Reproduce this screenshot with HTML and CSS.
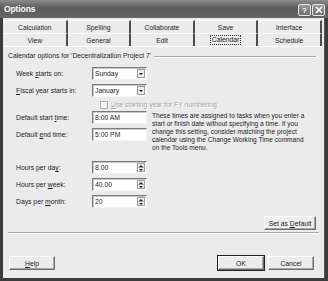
FILE: index.html
```html
<!DOCTYPE html>
<html lang="en">
<head>
    <meta charset="UTF-8">
    <title>Options</title>
    <link rel="stylesheet" href="styles.css">
</head>
<body>
    <div class="window">
        <div class="titlebar">
            <span class="title">Options</span>
            <div class="caption-btns">
                <span class="cap-btn">?</span>
                <span class="cap-btn">
                    <svg width="8" height="8" viewBox="0 0 8 8"><path d="M1 1 L7 7 M7 1 L1 7" stroke="#fff" stroke-width="1.6"/></svg>
                </span>
            </div>
        </div>

        <div class="client">
            <!-- two rows of tabs, the selected row sits next to the panel -->
            <div class="tabs">
                <div class="tab">Calculation</div>
                <div class="tab">Spelling</div>
                <div class="tab">Collaborate</div>
                <div class="tab">Save</div>
                <div class="tab">Interface</div>
                <div class="tab">View</div>
                <div class="tab">General</div>
                <div class="tab">Edit</div>
                <div class="tab active"><span class="focus">Calendar</span></div>
                <div class="tab">Schedule</div>
            </div>

            <div class="panel">
                <div class="group-head">
                    <span>Calendar options for 'Decentralization Project 7'</span>
                    <span class="rule"></span>
                </div>

                <div class="field first">
                    <label>Week <u>s</u>tarts on:</label>
                    <div class="combo">Sunday<span class="drop"></span></div>
                </div>
                <div class="field">
                    <label><u>F</u>iscal year starts in:</label>
                    <div class="combo">January<span class="drop"></span></div>
                </div>
                <div class="check-row">
                    <span class="checkbox"></span>
                    <span class="disabled"><u>U</u>se starting year for FY numbering</span>
                </div>

                <div class="times">
                    <div class="times-fields">
                        <div class="field">
                            <label>Default start <u>t</u>ime:</label>
                            <div class="textbox">8:00 AM</div>
                        </div>
                        <div class="field">
                            <label>Default <u>e</u>nd time:</label>
                            <div class="textbox">5:00 PM</div>
                        </div>
                    </div>
                    <p class="note">These times are assigned to tasks when you enter a start or finish date without specifying a time. If you change this setting, consider matching the project calendar using the Change Working Time command on the Tools menu.</p>
                </div>

                <div class="field hours">
                    <label>Hours per da<u>y</u>:</label>
                    <div class="spin">8.00<span class="spin-btns"><span class="up"></span><span class="down"></span></span></div>
                </div>
                <div class="field">
                    <label>Hours per <u>w</u>eek:</label>
                    <div class="spin">40.00<span class="spin-btns"><span class="up"></span><span class="down"></span></span></div>
                </div>
                <div class="field">
                    <label>Days per <u>m</u>onth:</label>
                    <div class="spin">20<span class="spin-btns"><span class="up"></span><span class="down"></span></span></div>
                </div>

                <div class="default-row">
                    <button class="btn btn-default-set">Set as <u>D</u>efault</button>
                </div>
            </div>

            <div class="divider"></div>

            <div class="footer">
                <button class="btn"><u>H</u>elp</button>
                <div class="footer-right">
                    <button class="btn btn-ok">OK</button>
                    <button class="btn">Cancel</button>
                </div>
            </div>
        </div>
    </div>
</body>
</html>
```

FILE: styles.css
```css
body {
    margin: 0;
    font-family: "Liberation Sans", Arial, sans-serif;
    font-size: 6.8px;
    color: #1e1e1e;
    background: #3c3c3c;
}

.window {
    width: 328px;
    height: 281px;
    display: flex;
    flex-direction: column;
    background: #3c3c3c;
}

.titlebar {
    height: 18px;
    flex-shrink: 0;
    display: flex;
    align-items: center;
    justify-content: space-between;
    padding: 0 3px 0 4px;
    background: linear-gradient(#8c8c8c, #5c5c5c 45%, #666);
}

.title {
    color: #fff;
    font-size: 8.5px;
    font-weight: bold;
    letter-spacing: -0.1px;
}

.caption-btns {
    display: flex;
    gap: 1px;
    margin-top: 2px;
}

.cap-btn {
    width: 11px;
    height: 10px;
    display: flex;
    align-items: center;
    justify-content: center;
    border: 1px solid #e6e6e6;
    border-radius: 2px;
    background: linear-gradient(#9a9a9a, #6e6e6e);
    color: #fff;
    font-size: 8px;
    font-weight: bold;
}

.client {
    flex: 1;
    display: flex;
    flex-direction: column;
    margin: 0 3px 3px;
    padding: 2px 0 0 1px;
    background: #ebebeb;
    border-right: 1px solid #555;
}

.tabs {
    width: 318px;
    display: grid;
    grid-template-columns: repeat(5, 1fr);
    grid-auto-rows: 13px;
}

.tab {
    display: flex;
    align-items: center;
    justify-content: center;
    border-top: 1px solid #fbfbfb;
    border-right: 2px solid #4e4e4e;
}

.tab .focus {
    padding: 0 1px;
    border: 1px dotted #333;
    line-height: 8px;
}

.panel {
    width: 318px;
    height: 186px;
    display: flex;
    flex-direction: column;
    padding: 4px 0 0 0;
    border-top: 1px solid #fff;
    box-sizing: border-box;
}

.group-head {
    display: flex;
    align-items: center;
    gap: 3px;
    height: 9px;
    padding: 0 6px 0 4px;
}

.group-head .rule {
    flex: 1;
    height: 0;
    margin-top: 2px;
    border-top: 1px solid #a9a9a9;
    border-bottom: 1px solid #fff;
}

.field {
    display: flex;
    align-items: center;
    height: 13px;
    padding-left: 12px;
    margin-top: 4px;
}

.field.first {
    margin-top: 7px;
}

.field label {
    width: 76px;
}

.combo,
.textbox,
.spin {
    position: relative;
    width: 55px;
    height: 13px;
    box-sizing: border-box;
    display: flex;
    align-items: center;
    padding-left: 2px;
    background: #fff;
    border: 1px solid;
    border-color: #7a7a7a #f4f4f4 #f4f4f4 #7a7a7a;
    box-shadow: inset 1px 1px 0 #c8c8c8;
}

.drop {
    position: absolute;
    right: 1px;
    top: 1px;
    width: 8px;
    height: 9px;
    background: #ececec;
    border: 1px solid #9a9a9a;
    box-sizing: border-box;
}

.drop::after {
    content: "";
    position: absolute;
    left: 1px;
    top: 3px;
    border-left: 2px solid transparent;
    border-right: 2px solid transparent;
    border-top: 2px solid #111;
}

.spin-btns {
    position: absolute;
    right: 1px;
    top: 1px;
    width: 8px;
    height: 9px;
    display: flex;
    flex-direction: column;
    background: #ececec;
    border: 1px solid #a0a0a0;
    box-sizing: border-box;
}

.spin-btns span {
    flex: 1;
    position: relative;
}

.spin-btns .up {
    border-bottom: 1px solid #a0a0a0;
}

.spin-btns .up::after,
.spin-btns .down::after {
    content: "";
    position: absolute;
    left: 1px;
    border-left: 2px solid transparent;
    border-right: 2px solid transparent;
}

.spin-btns .up::after {
    top: 1px;
    border-bottom: 2px solid #222;
}

.spin-btns .down::after {
    top: 1px;
    border-top: 2px solid #222;
}

.check-row {
    display: flex;
    align-items: center;
    gap: 3px;
    height: 9px;
    margin-top: 3px;
    padding-left: 96px;
}

.checkbox {
    width: 8px;
    height: 8px;
    box-sizing: border-box;
    border: 1px solid #b0b0b0;
    background: #f3f3f3;
}

.disabled {
    color: #a5a5a5;
    text-shadow: 1px 1px 0 #fff;
}

.times {
    display: flex;
    align-items: flex-start;
    margin-top: 2px;
}

.times .field:first-child {
    margin-top: 0;
}

.note {
    width: 158px;
    margin: 1px 0 0 5px;
    font-size: 6.6px;
    line-height: 8px;
}

.field.hours {
    margin-top: 9px;
}

.default-row {
    display: flex;
    justify-content: flex-end;
    padding-right: 6px;
    margin-top: 8px;
}

.btn {
    height: 14px;
    padding: 0;
    font-family: inherit;
    font-size: 6.8px;
    color: #1e1e1e;
    background: #ececec;
    border: 1px solid;
    border-color: #fff #6c6c6c #6c6c6c #fff;
    box-shadow: inset -1px -1px 0 #a8a8a8;
}

.btn-default-set {
    width: 52px;
}

.divider {
    height: 0;
    margin: 0 5px 0 4px;
    border-top: 1px solid #a9a9a9;
    border-bottom: 1px solid #fff;
}

.footer {
    display: flex;
    justify-content: space-between;
    margin-top: 22px;
    padding: 0 10px 0 5px;
}

.footer .btn {
    width: 46px;
}

.footer-right {
    display: flex;
    gap: 4px;
}

.btn-ok {
    outline: 1px solid #222;
}
```
